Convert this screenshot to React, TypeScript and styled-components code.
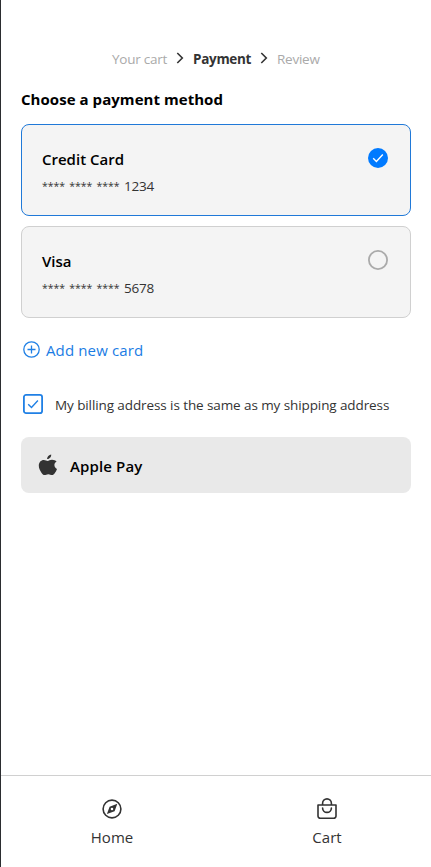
import React from "react";
import styled, { createGlobalStyle } from "styled-components";

const Global = createGlobalStyle`
  * { box-sizing: border-box; }
  body { margin: 0; background: #fff; font-family: "Open Sans", "Noto Sans", sans-serif; }
`;

const Screen = styled.div`
  display: flex;
  flex-direction: column;
  width: 431px;
  height: 867px;
  border-left: 1px solid #2b2d30;
  background: #fff;
`;

const Text = styled.span<{ $size: number; $line: number; $color?: string; $weight?: number; $track?: number }>`
  display: block;
  white-space: nowrap;
  font-size: ${(p) => p.$size}px;
  line-height: ${(p) => p.$line}px;
  color: ${(p) => p.$color ?? "#333"};
  font-weight: ${(p) => p.$weight ?? 400};
  letter-spacing: ${(p) => p.$track ?? 0}px;
`;

const Main = styled.main`
  flex: 1;
  display: flex;
  flex-direction: column;
  padding: 49px 20px 0;
`;

const Steps = styled.nav`
  display: grid;
  grid-template-columns: 55px 26px 58px 26px 44px;
  height: 20px;
  margin-left: 91px;
  align-items: center;
`;

const Chevron = styled.svg`
  width: 8px;
  height: 12px;
  margin: -2px 0 0 9px;
`;

const Heading = styled.h1`
  margin: 19px 0 0;
  height: 36px;
`;

const Card = styled.button<{ $selected?: boolean }>`
  display: flex;
  justify-content: space-between;
  align-items: flex-start;
  height: 92px;
  margin: 0 0 10px;
  padding: 23px 22px 0 20px;
  border: 1px solid ${(p) => (p.$selected ? "#2079d8" : "#d0d0d0")};
  border-radius: 8px;
  background: #f4f4f4;
  font-family: inherit;
  text-align: left;
`;

const CardInfo = styled.span`
  display: grid;
  row-gap: 6px;
`;

const CardNumber = styled.span`
  display: grid;
  grid-template-columns: 82px auto;
`;

const Mask = styled(Text)`
  word-spacing: 1.4px;
`;

const RadioIcon = styled.svg`
  width: 20px;
  height: 20px;
`;

const AddCard = styled.button`
  display: flex;
  align-items: center;
  gap: 6px;
  height: 24px;
  margin: 10px 0 0;
  padding: 0 0 0 2px;
  border: 0;
  background: none;
  font-family: inherit;
`;

const AddIcon = styled.svg`
  width: 17px;
  height: 17px;
  margin-top: -1px;
`;

const Billing = styled.div`
  display: flex;
  align-items: flex-start;
  gap: 12px;
  height: 20px;
  margin-top: 32px;
  padding-left: 2px;
`;

const CheckIcon = styled.svg`
  width: 20px;
  height: 20px;
`;

const ApplePay = styled.button`
  display: flex;
  align-items: center;
  gap: 12px;
  height: 56px;
  margin: 23px 0 0;
  padding: 2px 0 0 17px;
  border: 0;
  border-radius: 8px;
  background: #e9e9e9;
  font-family: inherit;
`;

const AppleIcon = styled.svg`
  width: 20px;
  height: 22px;
  margin-top: -2px;
`;

const TabBar = styled.footer`
  display: grid;
  grid-template-columns: 215px 215px;
  padding-left: 3px;
  height: 92px;
  border-top: 1px solid #d0d0d0;
`;

const Tab = styled.div`
  display: flex;
  flex-direction: column;
  align-items: center;
  padding-top: 21px;
  gap: 5px;
`;

const TabLabel = styled(Text)`
  padding-left: 1px;
`;

const TabIcon = styled.svg`
  width: 24px;
  height: 24px;
  fill: none;
  stroke: #333;
  stroke-width: 1.6;
  stroke-linejoin: round;
  stroke-linecap: round;
`;

const StepChevron = () => (
  <Chevron viewBox="0 0 8 12" fill="none" stroke="#333" strokeWidth="1.6">
    <path d="M1.3 1 6.3 6 1.3 11" />
  </Chevron>
);

type CardData = { name: string; digits: string; selected?: boolean };
const cards: CardData[] = [
  { name: "Credit Card", digits: "1234", selected: true },
  { name: "Visa", digits: "5678" },
];

export default function App() {
  return (
    <>
      <Global />
      <Screen>
        <Main>
          <Steps>
            <Text $size={13.5} $line={20} $color="#aaa" $track={-0.25}>Your cart</Text>
            <StepChevron />
            <Text $size={13.5} $line={20} $weight={700} $track={-0.3}>Payment</Text>
            <StepChevron />
            <Text $size={13.5} $line={20} $color="#aaa" $track={-0.25}>Review</Text>
          </Steps>
          <Heading>
            <Text $size={15} $line={22} $weight={700} $color="#000" $track={0.05}>Choose a payment method</Text>
          </Heading>
          {cards.map((c) => (
            <Card key={c.name} $selected={c.selected}>
              <CardInfo>
                <Text $size={15} $line={22} $weight={600} $color="#000">{c.name}</Text>
                <CardNumber>
                  <Mask $size={10.5} $line={20}>**** **** ****</Mask>
                  <Text $size={13.5} $line={20} $track={-0.2}>{c.digits}</Text>
                </CardNumber>
              </CardInfo>
              <RadioIcon viewBox="0 0 20 20" fill="none">
                {c.selected ? (
                  <>
                    <circle cx="10" cy="10" r="10" fill="#007aff" />
                    <path d="M5.2 10.3 8.4 13.4 14.8 6.5" stroke="#fff" strokeWidth="1.4" />
                  </>
                ) : (
                  <circle cx="10" cy="10" r="9.1" stroke="#aaa" strokeWidth="1.8" />
                )}
              </RadioIcon>
            </Card>
          ))}
          <AddCard>
            <AddIcon viewBox="0 0 17 17" fill="none" stroke="#2080e5" strokeWidth="1.3">
              <circle cx="8.5" cy="8.5" r="7.7" />
              <path d="M8.5 4.5v8M4.5 8.5h8" />
            </AddIcon>
            <Text $size={15} $line={24} $color="#1a7ce4" $track={0.13}>Add new card</Text>
          </AddCard>
          <Billing>
            <CheckIcon viewBox="0 0 20 20" fill="none" stroke="#2080e5">
              <rect x="0.9" y="0.9" width="18.2" height="18.2" rx="2.2" strokeWidth="1.8" />
              <path d="M5.2 10.2 8.5 13.5 14.9 6.6" strokeWidth="1.4" />
            </CheckIcon>
            <Text $size={13.5} $line={22} $track={-0.095}>My billing address is the same as my shipping address</Text>
          </Billing>
          <ApplePay>
            <AppleIcon viewBox="0 0 20 22" fill="#333">
              <path d="M13.2.4c.1 1.4-.4 2.600-1.200 3.400-.8.900-1.800 1.400-2.900 1.300-.1-1.300.5-2.400 1.200-3.200C11.100 1 12.200.5 13.200.4ZM18.600 7.600c-1.400.9-2.200 2-2.200 3.500 0 1.800 1 3.100 2.600 3.800-.5 1.600-1.300 3-2.300 4.300-.8 1.100-1.500 1.900-2.700 1.900-1.400 0-1.900-.8-3.700-.8s-2.400.8-3.700.8c-1.300 0-2.200-1.100-3-2.200C1.900 16.600.8 14.200.8 11.600c0-3.400 2.200-5.700 5-5.700 1.600 0 2.900 1 3.900 1 .9 0 2.400-1.100 4.300-1.100 2 0 3.500.8 4.600 1.800Z" />
            </AppleIcon>
            <Text $size={15} $line={22} $weight={600} $color="#000" $track={0.12}>Apple Pay</Text>
          </ApplePay>
        </Main>
        <TabBar>
          <Tab>
            <TabIcon viewBox="0 0 24 24">
              <circle cx="12" cy="12" r="8.9" />
              <path fill="#333" stroke="none" fillRule="evenodd" d="M17.300 6.700 14.600 14.200 6.900 17.100 9.600 9.700ZM12 10.700a1.300 1.300 0 1 0 0 2.600 1.300 1.300 0 0 0 0-2.600Z" />
            </TabIcon>
            <TabLabel $size={15} $line={22}>Home</TabLabel>
          </Tab>
          <Tab>
            <TabIcon viewBox="0 0 24 24">
              <path d="M3 8h18v11a2.300 2.300 0 0 1-2.300 2.300H5.300A2.300 2.300 0 0 1 3 19ZM7.600 8V6.300a4.400 4.400 0 0 1 8.800 0V8M7.600 11a4.400 4.400 0 0 0 8.800 0" />
            </TabIcon>
            <TabLabel $size={15} $line={22}>Cart</TabLabel>
          </Tab>
        </TabBar>
      </Screen>
    </>
  );
}
